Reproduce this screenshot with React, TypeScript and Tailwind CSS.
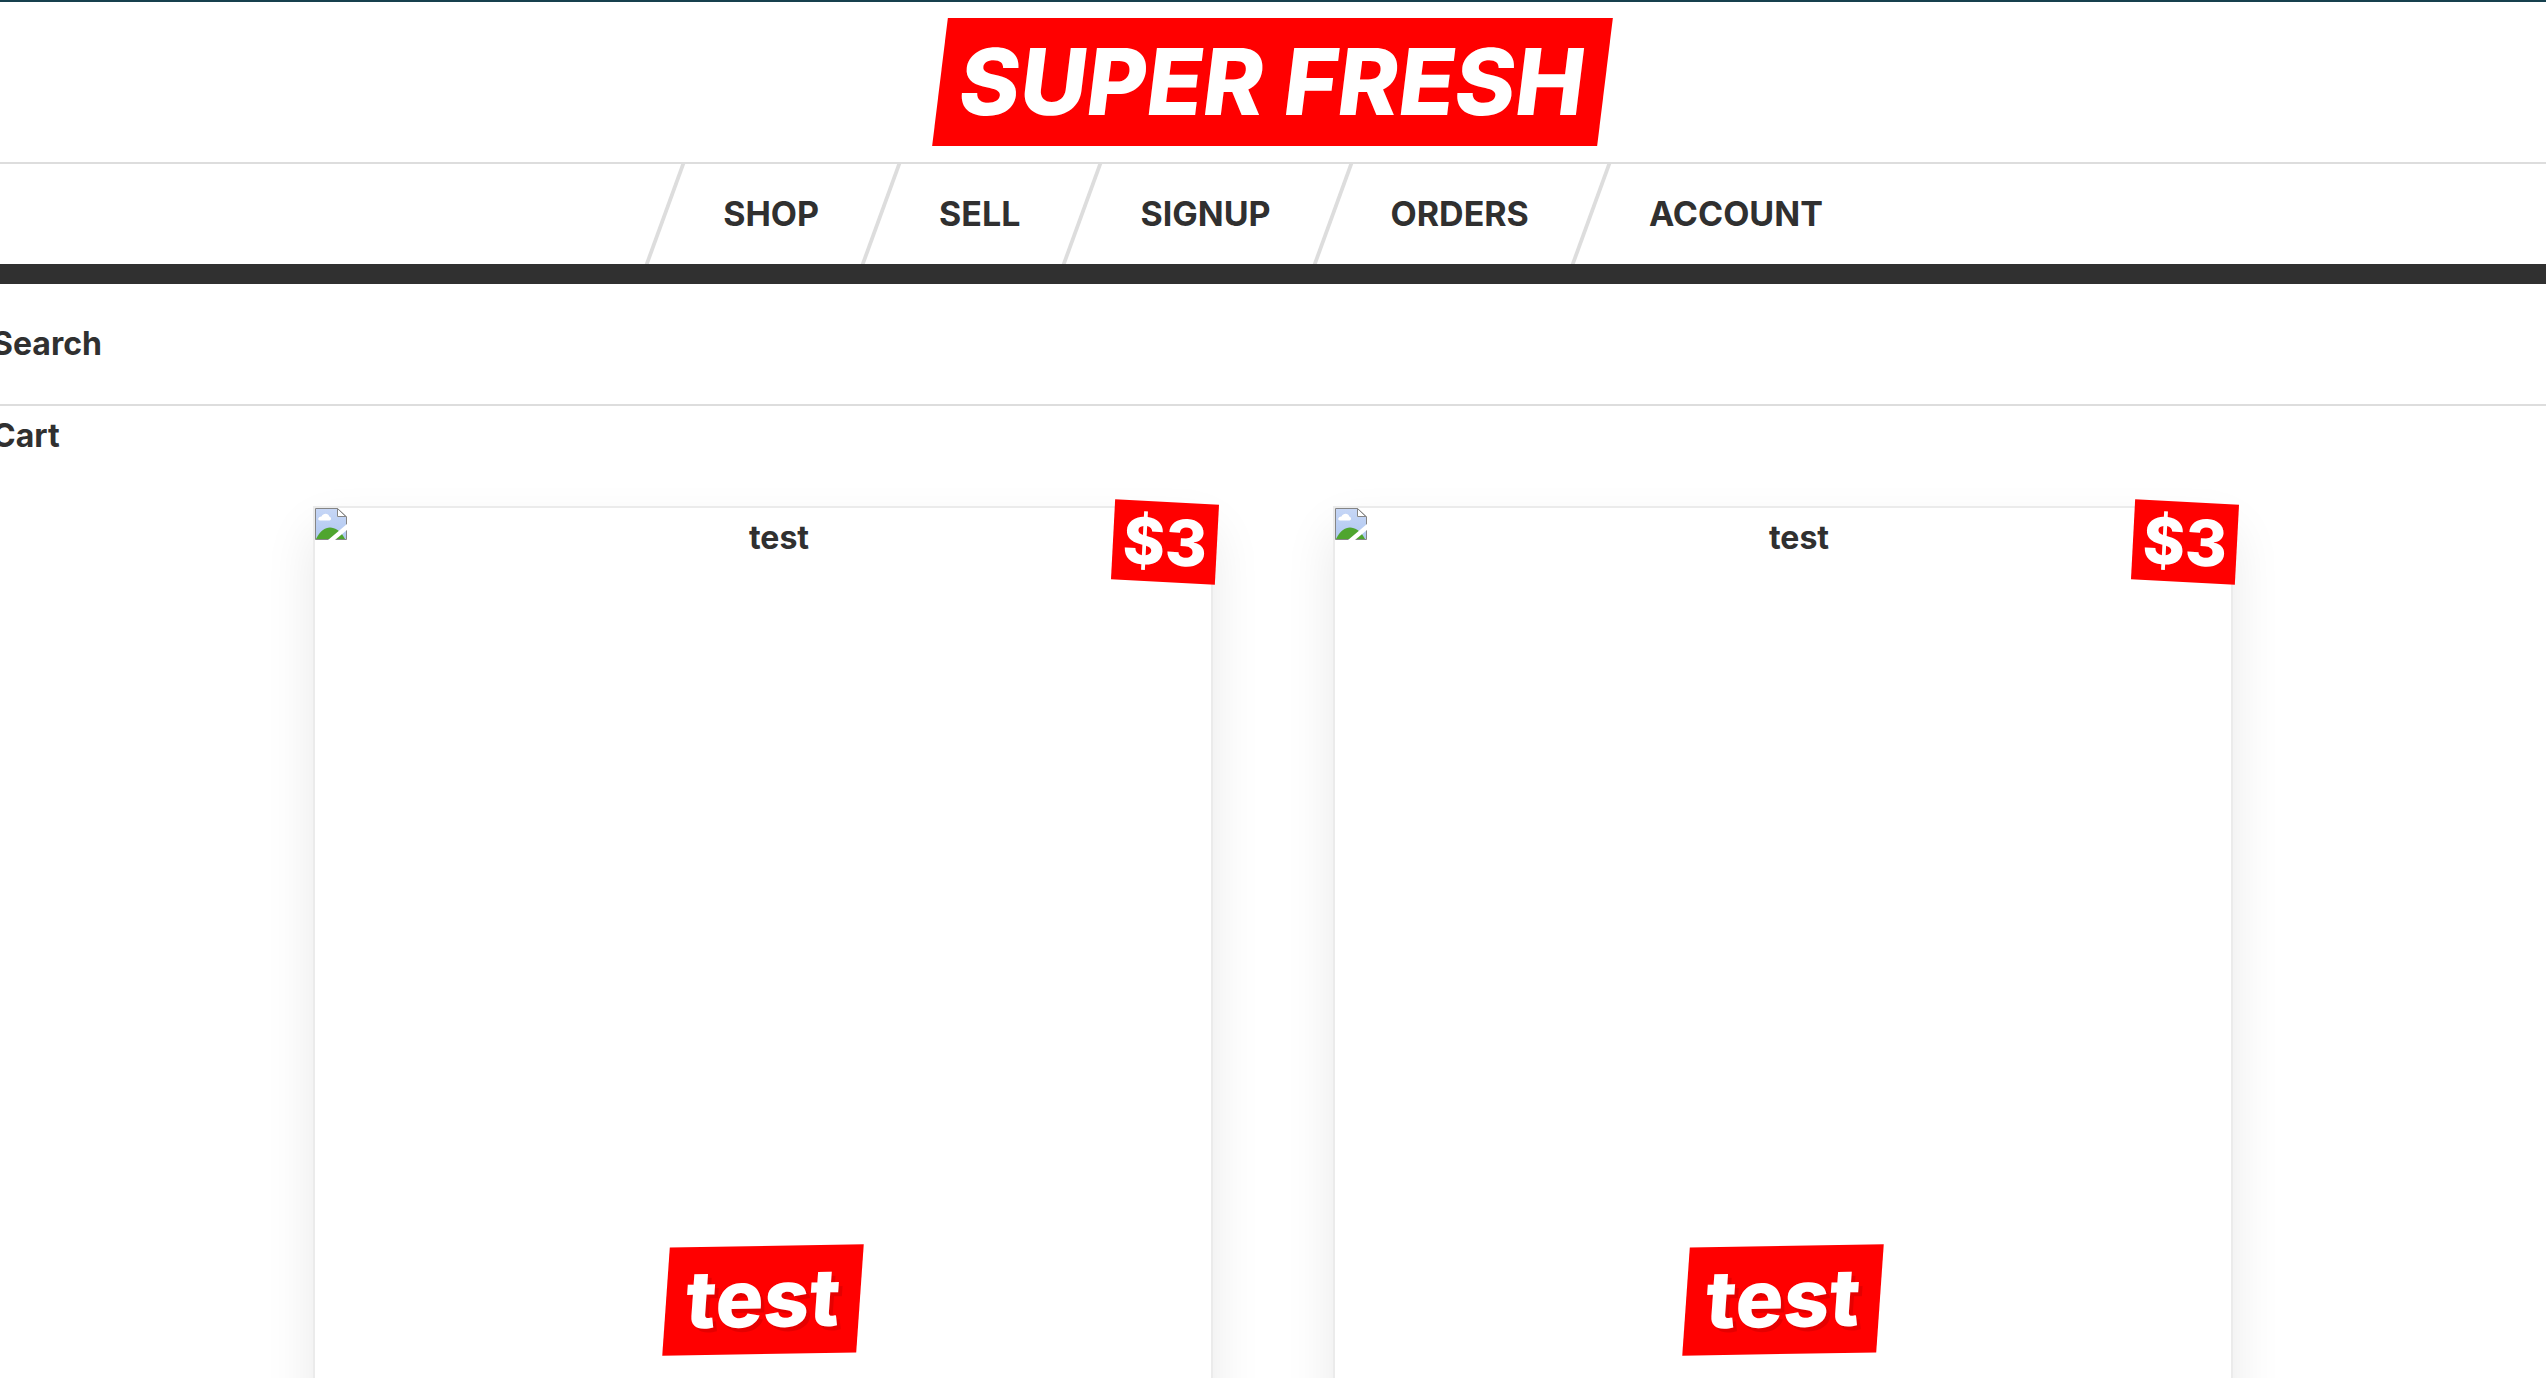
const links = ["Shop", "Sell", "Signup", "Orders", "Account"];

const items = [
  { id: 1, title: "test", price: "$3" },
  { id: 2, title: "test", price: "$3" },
];

function BrokenImage() {
  return (
    <svg className="size-8 shrink-0" viewBox="0 0 32 32" aria-hidden="true">
      <defs>
        <linearGradient id="sky" x1="0" y1="0" x2="0" y2="1">
          <stop offset="0" stopColor="#c6d6f6" />
          <stop offset="1" stopColor="#b0c8f0" />
        </linearGradient>
      </defs>
      <path d="M1 1H22L31 9V31H1Z" fill="url(#sky)" />
      <path d="M1 31C5 23 10 19.5 15 19.5S26 23 30 31Z" fill="#4fa52f" />
      <path d="M5 12.5C2.5 12.5 2.5 8.8 6.5 8.5C8 5 13.5 4.8 14.5 8.8C16.5 9 16.5 12.5 14.5 12.5Z" fill="#fff" />
      <path d="M22 1L31 9H22Z" fill="#fff" />
      <path d="M0.5 31.5V0.5H22.5L31.5 9V31.5Z" fill="none" stroke="#858585" />
      <path d="M22.5 0.5V8.5H31.5" fill="none" stroke="#858585" />
      <path d="M22.5 0.5L31.5 9" fill="none" stroke="#858585" />
      <path d="M13 32L32 16V22L20 32Z" fill="#fff" />
    </svg>
  );
}

function Header() {
  return (
    <header>
      <div className="flex h-40 items-center justify-center">
        <h1 className="-skew-x-[7deg] bg-[#ff0000] px-5">
          <a href="#home" className="block text-[92px] leading-32 font-extrabold text-white uppercase">
            Super Fresh
          </a>
        </h1>
      </div>
      <nav className="flex justify-center border-t-2 border-b-20 border-t-[#dddddd] border-b-[#303030]">
        {links.map((label) => (
          <a
            key={label}
            href={"#" + label.toLowerCase()}
            className="relative px-15 text-[34px] leading-25 uppercase before:absolute before:inset-y-0 before:left-0 before:w-1 before:-skew-x-[20deg] before:bg-[#dddddd]"
          >
            {label}
          </a>
        ))}
      </nav>
      <div className="border-b-2 border-[#dddddd]">
        <p className="-ml-2 leading-30">Search</p>
      </div>
      <div className="-ml-2 leading-15">Cart</div>
    </header>
  );
}

function Item({ title, price }: { title: string; price: string }) {
  return (
    <article className="relative flex min-h-[1100px] flex-col items-center border-2 border-[#ebebeb] bg-white shadow-[0_24px_48px_0_rgba(0,0,0,0.09)]">
      <div className="flex h-[800px] w-full">
        <BrokenImage />
        <span className="flex-1 text-center leading-15">{title}</span>
      </div>
      <h2 className="-mt-15.5 -rotate-1 -skew-x-[5deg] bg-[#ff0000] px-5">
        <a
          href="#item"
          className="block pb-1 text-[80px] leading-26 font-extrabold text-white [text-shadow:4px_4px_0_rgba(0,0,0,0.1)]"
        >
          {title}
        </a>
      </h2>
      <span className="absolute -top-1.5 -right-1.5 rotate-3 bg-[#ff0000] px-2.5 text-[64px] leading-20 font-extrabold text-white">
        {price}
      </span>
    </article>
  );
}

export default function App() {
  return (
    <div className="h-screen overflow-hidden border-t-2 border-[#16404e] bg-white font-['Inter',sans-serif] text-[32px] font-bold text-[#303030]">
      <Header />
      <main className="mx-auto grid max-w-[2000px] grid-cols-2 gap-30 p-10">
        {items.map((item) => (
          <Item key={item.id} title={item.title} price={item.price} />
        ))}
      </main>
    </div>
  );
}
